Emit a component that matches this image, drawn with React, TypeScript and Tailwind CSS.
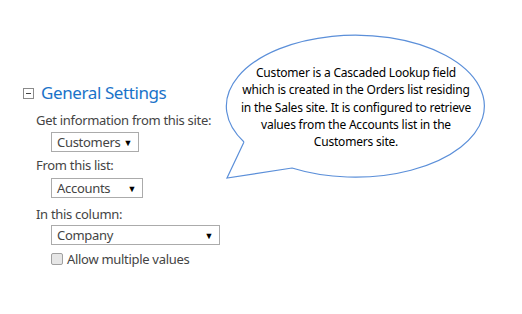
import React from "react";

const font = { fontFamily: '"Noto Sans", "Open Sans", sans-serif' };

function Select({ value, width }: { value: string; width: string }) {
  return (
    <div
      className={`flex items-center justify-between h-[20px] border border-[#ababab] bg-white pl-[5px] pr-[6px] text-[13px] text-[#444] ${width}`}
    >
      <span className="leading-none">{value}</span>
      <span className="text-[9px] text-black leading-none">▼</span>
    </div>
  );
}

const lines = [
  "Customer is a Cascaded Lookup field",
  "which is created in the Orders list residing",
  "in the Sales site. It is configured to retrieve",
  "values from the Accounts list in the",
  "Customers site.",
];

function Bubble() {
  return (
    <div className="absolute left-[224px] top-[32px] w-[266px] h-[150px]">
      <svg width="266" height="150" className="absolute inset-0">
        <path
          d="M20 110 A129 71 0 1 1 68 136 L3 146 L20 110"
          fill="white"
          stroke="#5b8fd9"
          strokeWidth="1.2"
        />
      </svg>
      <div className="absolute left-0 top-[32px] w-[264px] flex flex-col items-center text-[12px] leading-[17.3px] text-black tracking-[-0.2px]">
        {lines.map((l) => (
          <span key={l} className="whitespace-nowrap">{l}</span>
        ))}
      </div>
    </div>
  );
}

export default function App() {
  return (
    <div className="relative w-[522px] h-[314px] bg-white overflow-hidden" style={font}>
      <div className="pt-[82px] pl-[23px]">
        <div className="flex items-center gap-[7px]">
          <div className="w-[11px] h-[11px] border border-[#8a8a8a] flex items-center justify-center">
            <div className="w-[5px] h-px bg-[#444]" />
          </div>
          <span className="text-[17px] tracking-[-0.4px] text-[#1a73c9] leading-[22px]">General Settings</span>
        </div>
        <div className="pl-[13px] text-[13px] tracking-[-0.3px] text-[#444]">
          <div className="mt-[7px] leading-[18px]">Get information from this site:</div>
          <div className="pl-[15px] mt-[3px]">
            <Select value="Customers" width="w-[88px]" />
          </div>
          <div className="mt-[4px] leading-[18px]">From this list:</div>
          <div className="pl-[15px] mt-[4px]">
            <Select value="Accounts" width="w-[92px]" />
          </div>
          <div className="mt-[7px] leading-[18px]">In this column:</div>
          <div className="pl-[15px] mt-[2px]">
            <Select value="Company" width="w-[169px]" />
          </div>
          <div className="pl-[15px] mt-[6px] flex items-center gap-[4px]">
            <div className="w-[12px] h-[12px] rounded-[2px] border border-[#a0a0a0] bg-[#e6e6e6]" />
            <span className="leading-[16px]">Allow multiple values</span>
          </div>
        </div>
      </div>
      <Bubble />
    </div>
  );
}
